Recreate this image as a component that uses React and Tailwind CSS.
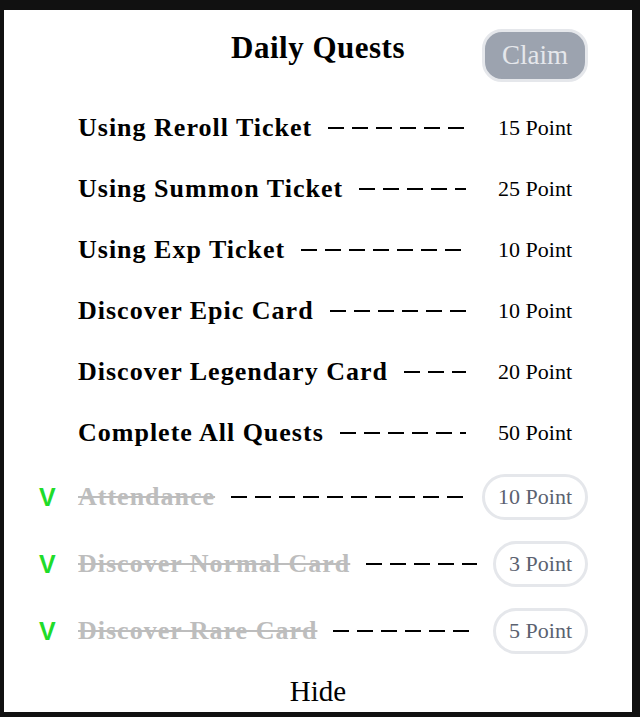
import React from 'react';

const quests = [
  { name: 'Using Reroll Ticket', point: 15, done: false },
  { name: 'Using Summon Ticket', point: 25, done: false },
  { name: 'Using Exp Ticket', point: 10, done: false },
  { name: 'Discover Epic Card', point: 10, done: false },
  { name: 'Discover Legendary Card', point: 20, done: false },
  { name: 'Complete All Quests', point: 50, done: false },
  { name: 'Attendance', point: 10, done: true },
  { name: 'Discover Normal Card', point: 3, done: true },
  { name: 'Discover Rare Card', point: 5, done: true },
];

function QuestRow({ quest }) {
  return (
    <div className={`flex items-center ${quest.done ? 'h-[46px]' : 'h-[40px]'}`}>
      <span className="w-[40px] shrink-0 pl-[1px] text-[25px] font-bold leading-none text-[#1fdc2a] font-['Liberation_Sans',sans-serif]">
        {quest.done ? 'V' : ''}
      </span>
      <span
        className={`whitespace-nowrap text-[26px] tracking-[1px] font-bold leading-[40px] ${
          quest.done ? 'text-[#bdbdbd] line-through decoration-2' : 'text-black'
        }`}
      >
        {quest.name}
      </span>
      <div className="flex-1 mx-4 h-[2px] bg-[repeating-linear-gradient(to_right,#000_0_16px,transparent_16px_24px)]" />
      <span
        className={`whitespace-nowrap text-[22px] leading-none rounded-full px-[13px] border-[3px] ${
          quest.done ? 'border-[#e5e7eb] text-[#5b6270] h-[46px] flex items-center' : 'border-transparent text-black'
        }`}
      >
        {quest.point} Point
      </span>
    </div>
  );
}

export default function App() {
  return (
    <div className="w-[640px] h-[717px] bg-[#111] pt-[10px] pl-[4px] pr-[8px] pb-[5px] font-['Liberation_Serif',serif]">
      <div className="bg-white h-full flex flex-col">
        <div className="grid grid-cols-[1fr_auto_1fr] items-start pt-[19px]">
          <div />
          <h1 className="text-[31px] tracking-[0.5px] font-bold leading-none mt-[3px] text-black">Daily Quests</h1>
          <button className="justify-self-end mr-[44px] w-[106px] h-[53px] rounded-[20px] bg-[#9ca3af] border-[3px] border-[#e5e7eb] text-[27px] text-[#e5e7eb]">
            Claim
          </button>
        </div>
        <div className="flex flex-col gap-[21px] mt-[26px] pl-[34px] pr-[44px]">
          {quests.map((q) => (
            <QuestRow key={q.name} quest={q} />
          ))}
        </div>
        <div className="mt-[21px] text-center text-[29px] leading-[32px] text-black">Hide</div>
      </div>
    </div>
  );
}
